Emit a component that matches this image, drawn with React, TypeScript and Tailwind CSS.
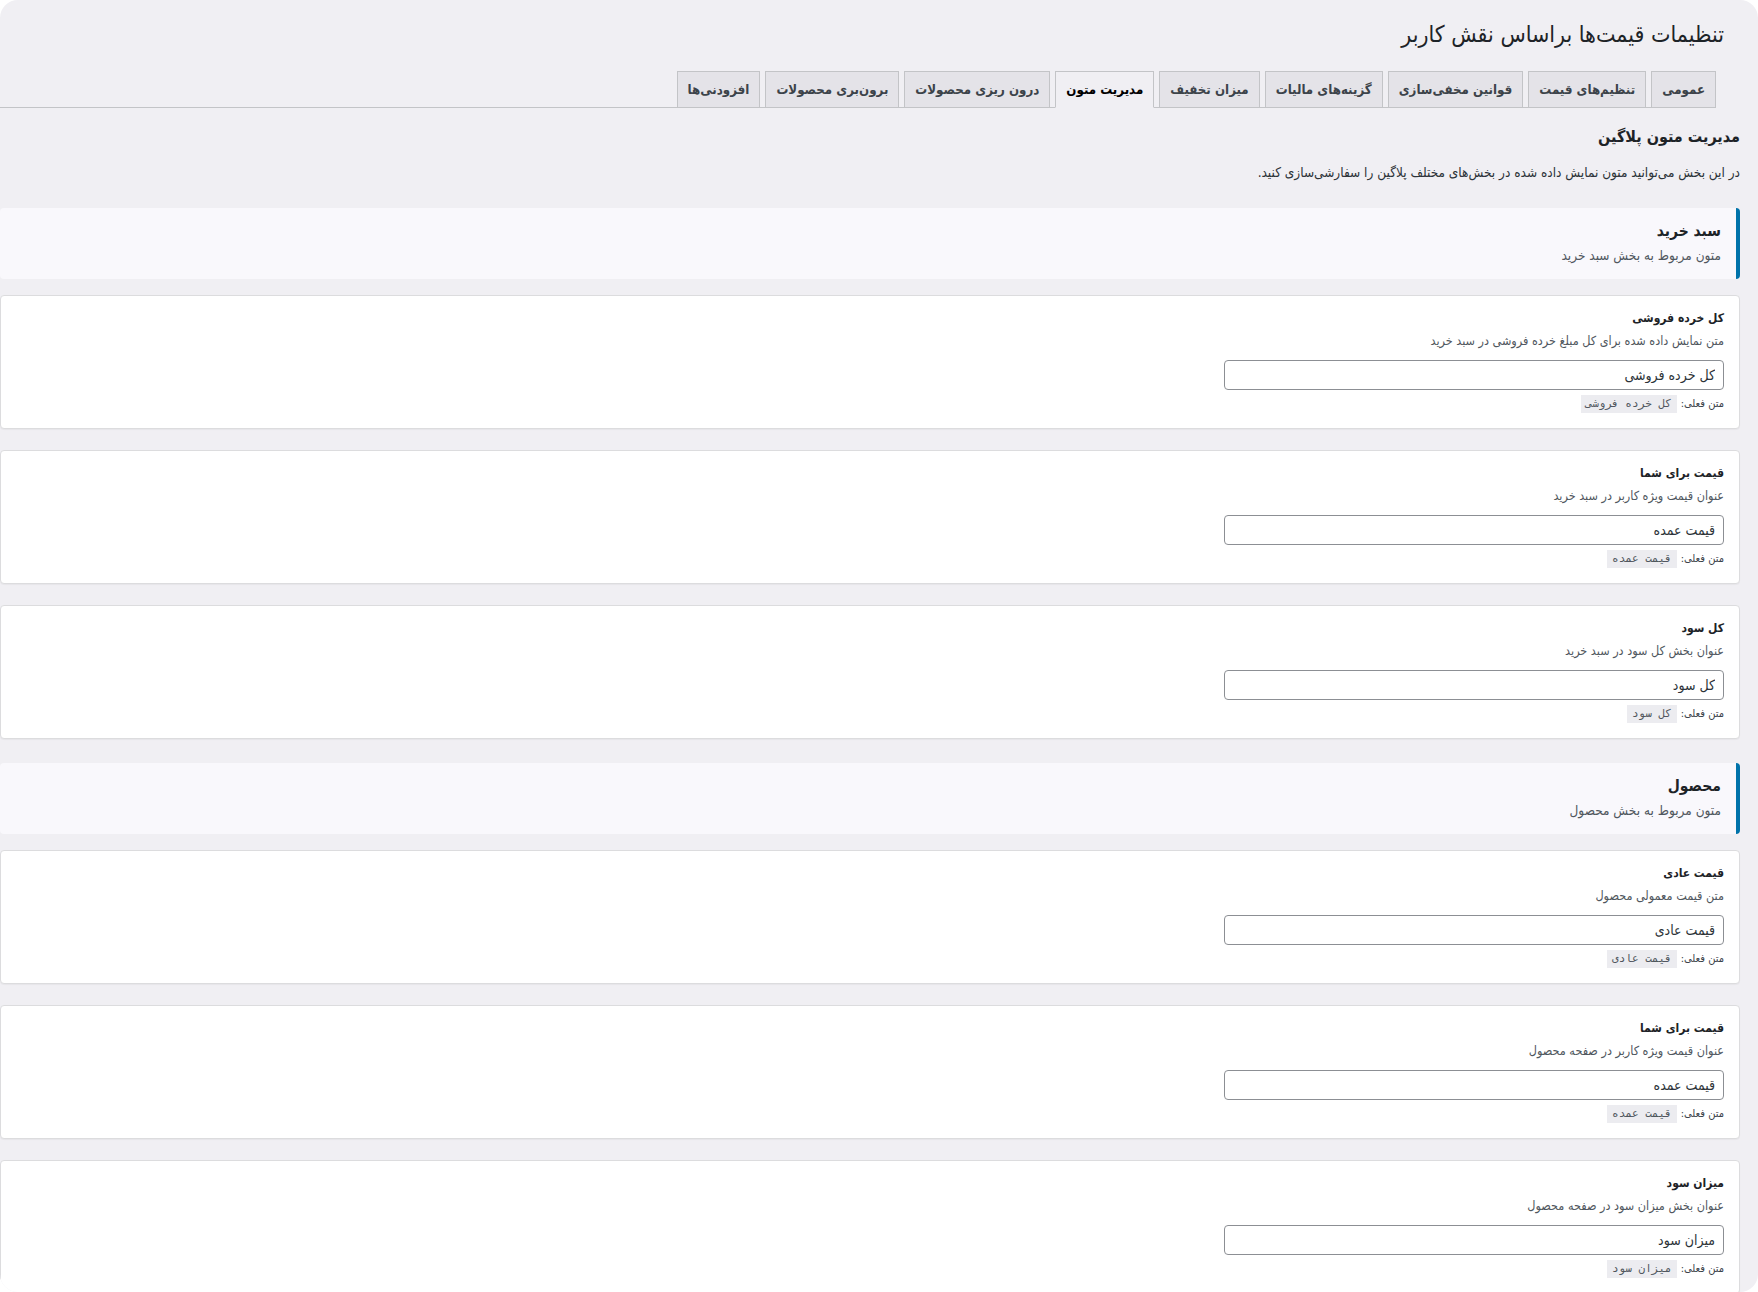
import React from "react";

const tabs = [
  "عمومی",
  "تنظیم‌های قیمت",
  "قوانین مخفی‌سازی",
  "گزینه‌های مالیات",
  "میزان تخفیف",
  "مدیریت متون",
  "درون ریزی محصولات",
  "برون‌بری محصولات",
  "افزودنی‌ها",
];

type Field = { label: string; desc: string; value: string };

const cartFields: Field[] = [
  { label: "کل خرده فروشی", desc: "متن نمایش داده شده برای کل مبلغ خرده فروشی در سبد خرید", value: "کل خرده فروشی" },
  { label: "قیمت برای شما", desc: "عنوان قیمت ویژه کاربر در سبد خرید", value: "قیمت عمده" },
  { label: "کل سود", desc: "عنوان بخش کل سود در سبد خرید", value: "کل سود" },
];

const productFields: Field[] = [
  { label: "قیمت عادی", desc: "متن قیمت معمولی محصول", value: "قیمت عادی" },
  { label: "قیمت برای شما", desc: "عنوان قیمت ویژه کاربر در صفحه محصول", value: "قیمت عمده" },
  { label: "میزان سود", desc: "عنوان بخش میزان سود در صفحه محصول", value: "میزان سود" },
];

const font = { fontFamily: '"DejaVu Sans Condensed", "DejaVu Sans", sans-serif' };

function SectionHeader({ title, sub }: { title: string; sub: string }) {
  return (
    <div className="bg-[#f9f8fc] border-r-4 border-[#0073aa] rounded-[4px] pr-[15px] pt-[11px] pb-[14px] h-[71px]">
      <div className="text-[15.5px] leading-[24px] font-bold text-[#1d2327]">{title}</div>
      <div className="text-[13.5px] leading-[20px] mt-[2px] text-[#50575e]">{sub}</div>
    </div>
  );
}

function FieldCard({ f }: { f: Field }) {
  return (
    <div className="bg-white border border-[#dcdcde] rounded-[4px] shadow-[0_1px_1px_rgba(0,0,0,0.04)] pr-[15px] pl-[15px] pt-[12px] pb-[15px] h-[134px]">
      <div className="text-[12px] leading-[20px] font-bold text-[#1d2327]">{f.label}</div>
      <div className="text-[12.5px] leading-[20px] mt-[3px] text-[#50575e]">{f.desc}</div>
      <input
        readOnly
        value={f.value}
        className="mt-[9px] block w-[500px] h-[30px] border border-[#8c8f94] rounded-[4px] px-[8px] text-[14px] text-[#2c3338] bg-white outline-none"
        style={font}
      />
      <div className="mt-[5px] flex items-center gap-[4px] text-[11px] leading-[18px] text-[#3c434a]">
        <span>متن فعلی:</span>
        <code
          className="bg-[#ececf0] px-[5px] text-[11px] leading-[18px] text-[#50575e]"
          style={{ fontFamily: '"DejaVu Sans Mono", monospace' }}
        >
          {f.value}
        </code>
      </div>
    </div>
  );
}

export default function App() {
  return (
    <div dir="rtl" className="bg-white w-[1758px] min-h-[1292px]" style={font}>
      <div className="bg-[#f0eff3] rounded-[18px] h-[1292px] overflow-hidden">
        <h1 className="pr-[34px] pt-[18px] text-[23px] leading-[32px] font-normal text-[#1d2327]">
          تنظیمات قیمت‌ها براساس نقش کاربر
        </h1>
        <div className="mt-[21px] mr-[42px] flex items-end gap-[5px] border-b border-[#c3c4c7] h-[37px]">
          {tabs.map((t) => {
            const active = t === "مدیریت متون";
            return (
              <div
                key={t}
                className={
                  active
                    ? "h-[37px] -mb-px px-[10px] border border-[#c3c4c7] border-b-[#f0eff3] bg-[#f0eff3] text-[13.2px] leading-[35px] font-bold text-black"
                    : "h-[36px] px-[10px] border border-[#c3c4c7] border-b-0 bg-[#e4e3e8] text-[13.2px] leading-[35px] font-bold text-[#3c434a]"
                }
              >
                {t}
              </div>
            );
          })}
        </div>
        <div className="pr-[18px]">
          <h2 className="mt-[17px] text-[16px] leading-[24px] font-bold text-[#1d2327]">مدیریت متون پلاگین</h2>
          <p className="mt-[13px] text-[13.5px] leading-[20px] text-[#2c3338]">
            در این بخش می‌توانید متون نمایش داده شده در بخش‌های مختلف پلاگین را سفارشی‌سازی کنید.
          </p>
          <div className="mt-[26px]">
            <SectionHeader title="سبد خرید" sub="متون مربوط به بخش سبد خرید" />
            <div className="mt-[16px] flex flex-col gap-[21px]">
              {cartFields.map((f, i) => (
                <FieldCard key={i} f={f} />
              ))}
            </div>
          </div>
          <div className="mt-[24px]">
            <SectionHeader title="محصول" sub="متون مربوط به بخش محصول" />
            <div className="mt-[16px] flex flex-col gap-[21px]">
              {productFields.map((f, i) => (
                <FieldCard key={i} f={f} />
              ))}
            </div>
          </div>
        </div>
      </div>
    </div>
  );
}
